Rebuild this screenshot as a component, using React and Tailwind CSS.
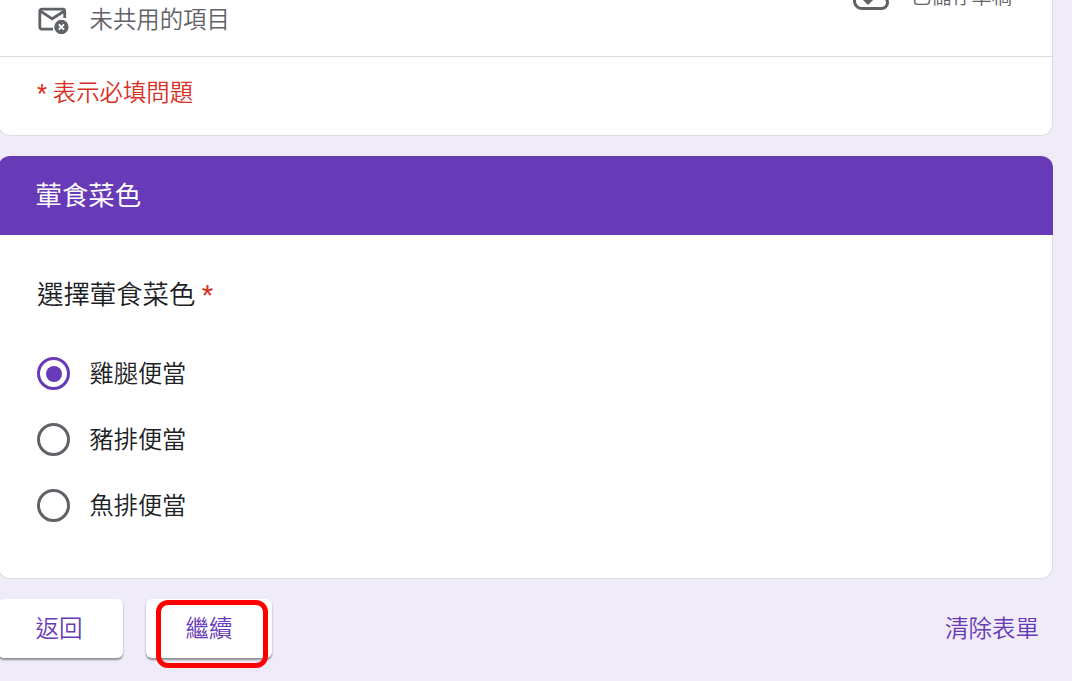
import { useState } from 'react';

const OPTIONS = ['雞腿便當', '豬排便當', '魚排便當'];

const MailOffIcon = () => (
	<svg width="32" height="28" viewBox="0 0 32 28" fill="none" className="text-[#5f6368]">
		<path d="M15 23.2H3.8a2 2 0 0 1-2-2V5.2a2 2 0 0 1 2-2h20.9a2 2 0 0 1 2 2V12" stroke="currentColor" strokeWidth="2.8" />
		<path d="M2.5 5.2l11.7 7.6L26 5.2" stroke="currentColor" strokeWidth="2.8" />
		<circle cx="23.4" cy="21" r="7.2" fill="currentColor" />
		<path d="M20.8 18.4l5.2 5.2M26 18.4l-5.2 5.2" stroke="#fff" strokeWidth="1.9" />
	</svg>
);

const CloudDoneIcon = () => (
	<svg width="36" height="36" viewBox="0 0 24 24" fill="#5f6368">
		<path d="M19.35 10.04C18.67 6.59 15.64 4 12 4 9.11 4 6.6 5.64 5.35 8.04 2.34 8.36 0 10.91 0 14c0 3.31 2.69 6 6 6h13c2.76 0 5-2.24 5-5 0-2.64-2.05-4.78-4.65-4.96zM19 18H6c-2.21 0-4-1.79-4-4 0-2.05 1.53-3.76 3.56-3.97l1.07-.11.5-.95C8.08 7.14 9.94 6 12 6c2.62 0 4.88 1.86 5.39 4.43l.3 1.5 1.53.11c1.56.1 2.78 1.41 2.78 2.96 0 1.65-1.35 3-3 3z" />
		<path d="M6.3 13H13.7L10 16.7z" />
	</svg>
);

const Radio = ({ label, checked, onSelect }) => (
	<button type="button" role="radio" aria-checked={checked} onClick={onSelect} className="flex h-[33px] items-center gap-[19.5px]">
		<span className={`flex size-[33px] items-center justify-center rounded-full border-3 ${checked ? 'border-[#673ab7]' : 'border-[#5f6368]'}`}>
			{checked && <span className="size-4 rounded-full bg-[#673ab7]" />}
		</span>
		<span className="pt-0.5 text-[24.2px] leading-[33px] text-[#202124]">{label}</span>
	</button>
);

const App = () => {
	const [selected, setSelected] = useState(OPTIONS[0]);

	return (
		<div className="h-[681px] overflow-hidden bg-[#f0ebf8] font-['Roboto','Noto_Sans_CJK_TC',sans-serif] font-[350]">
			<div className="-ml-0.5 w-[1055px]">
				<section className="h-[136px] rounded-b-xl border border-t-0 border-[#dadce0] bg-white">
					<div className="flex h-[57px] justify-between border-b border-[#dadce0] pr-10 pl-[39px]">
						<div className="flex items-start pt-[6px]">
							<MailOffIcon />
							<span className="ml-[19.5px] text-[23.4px] leading-[28px] text-[#5f6368]">未共用的項目</span>
						</div>
						<div className="-mt-5 flex items-start gap-[22px]">
							<CloudDoneIcon />
							<span className="text-[20.2px] leading-[34px] text-[#5f6368]">已儲存草稿</span>
						</div>
					</div>
					<p className="pt-[18px] pl-[38px] text-[23.4px] leading-9 text-[#d93025]">
						<span className="font-normal">*</span> 表示必填問題
					</p>
				</section>

				<section className="mt-5 h-[423px] rounded-xl border border-t-0 border-[#dadce0] bg-white">
					<h2 className="-mx-px h-[79px] rounded-t-xl bg-[#673ab7] pl-[37.5px] text-[26.4px] leading-[81px] font-normal text-white">葷食菜色</h2>
					<div className="pt-[41px] pl-[38px]">
						<p className="text-[26.4px] leading-[39px] text-[#202124]">
							選擇葷食菜色 <span className="font-normal text-[#d93025]">*</span>
						</p>
						<div role="radiogroup" className="mt-[42px] flex flex-col items-start gap-[33px]">
							{OPTIONS.map((label) => (
								<Radio key={label} label={label} checked={selected === label} onSelect={() => setSelected(label)} />
							))}
						</div>
					</div>
				</section>

				<div className="mt-5 flex items-center text-[23.5px] text-[#673ab7]">
					<button type="button" className="h-[59px] w-[125px] rounded-md bg-white pt-0.5 pr-[3px] shadow-[0_2px_2px_rgba(0,0,0,0.4)]">返回</button>
					<div className="relative ml-[23px]">
						<button type="button" className="h-[59px] w-[126px] rounded-md bg-white pt-0.5 shadow-[0_2px_2px_rgba(0,0,0,0.4)]">繼續</button>
						<span className="pointer-events-none absolute top-px left-[10px] h-[68px] w-[112px] rounded-xl border-5 border-[#ff0000]" />
					</div>
					<button type="button" className="mr-[14px] ml-auto pt-0.5">清除表單</button>
				</div>
			</div>
		</div>
	);
};

export default App;
